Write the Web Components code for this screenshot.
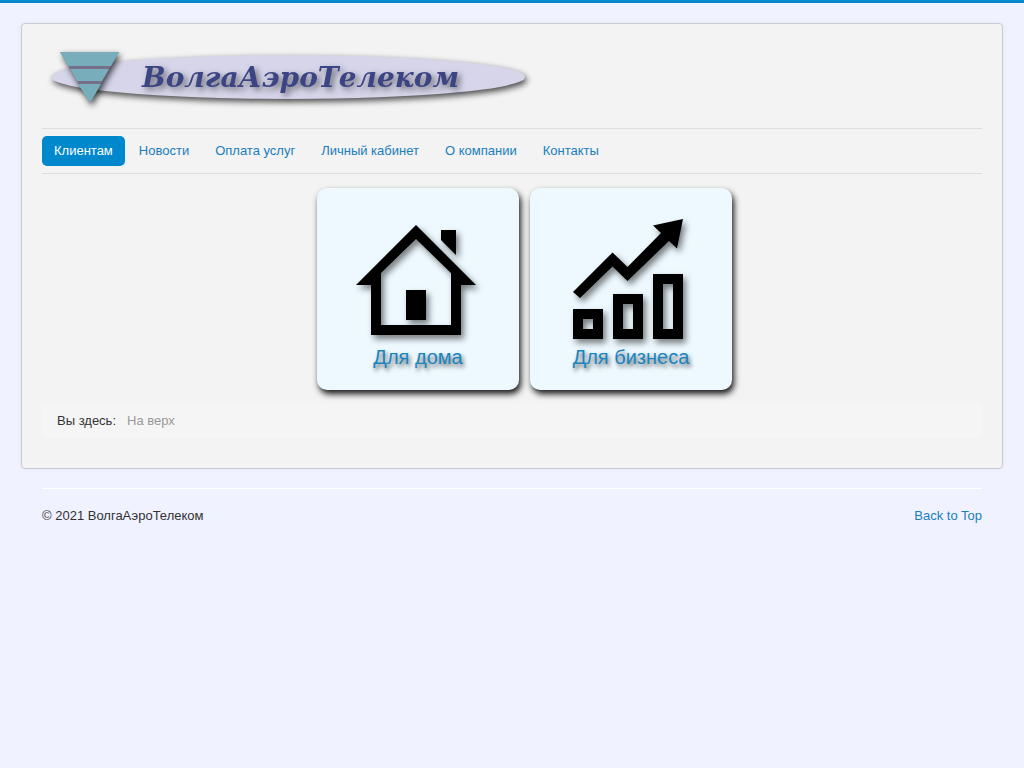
<!DOCTYPE html>
<html lang="ru">
<head>
<meta charset="utf-8">
<meta name="viewport" content="width=device-width, initial-scale=1">
<title>ВолгаАэроТелеком</title>
<style>
body {
  margin: 0;
  padding: 20px;
  border-top: 3px solid #0088cc;
  background: #f0f2ff;
  color: #333;
  font: 13px/18px "Liberation Sans", Arial, sans-serif;
}
</style>
</head>
<body>
<vat-page></vat-page>

<template id="page">
  <style>
    :host { display: block; max-width: 982px; margin: 0 auto; }
    main {
      padding: 20px 20px 30px;
      background: #f3f3f3;
      border: 1px solid #cacad0;
      border-radius: 4px;
      box-shadow: 0 0 6px rgba(0, 0, 0, .05);
    }
    .tiles { display: flex; flex-wrap: wrap; justify-content: center; gap: 11px; padding: 14px 0 14px 25px; }
  </style>
  <main>
    <vat-logo></vat-logo>
    <vat-nav>
      <vat-nav-item active>Клиентам</vat-nav-item>
      <vat-nav-item>Новости</vat-nav-item>
      <vat-nav-item>Оплата услуг</vat-nav-item>
      <vat-nav-item>Личный кабинет</vat-nav-item>
      <vat-nav-item>О компании</vat-nav-item>
      <vat-nav-item>Контакты</vat-nav-item>
    </vat-nav>
    <div class="tiles">
      <vat-tile>
        <svg slot="icon" viewBox="317 188 202 156" width="202" height="156" aria-hidden="true">
          <path fill-rule="evenodd" d="M416 225L476 285H461V335H371V285H356ZM416 239L381 273V325H451V273Z"/>
          <path d="M406 290H426V320H406ZM441 230H456V255L441 240Z"/>
        </svg>
        Для дома
      </vat-tile>
      <vat-tile>
        <svg slot="icon" viewBox="530 188 202 156" width="202" height="156" aria-hidden="true">
          <path d="M573 292L612.500 252.500L627.500 267L661 233L653 225.500L683 219L677 248.500L669 241L627.500 281L612.500 266.500L580 298Z"/>
          <path fill-rule="evenodd" d="M573 309H603V339H573ZM583 319V329H593V319ZM613 294H643V339H613ZM623 304V329H633V304ZM653 274H683V339H653ZM663 284V329H673V284Z"/>
        </svg>
        Для бизнеса
      </vat-tile>
    </div>
    <vat-crumbs>На верх</vat-crumbs>
  </main>
  <vat-footer>© 2021 ВолгаАэроТелеком</vat-footer>
</template>

<template id="logo">
  <style>
    :host { display: block; margin-bottom: 10px; }
    a, svg { display: block; }
    a { max-width: 500px; }
    svg { width: 100%; height: auto; overflow: visible; }
    .s { filter: drop-shadow(2px 3px 3px rgba(0, 0, 0, .7)); }
    text { font: italic bold 28px "DejaVu Serif", serif; fill: #3c4583; filter: drop-shadow(3px 3px 3px rgba(0, 0, 0, .5)); }
  </style>
  <a href="#" aria-label="ВолгаАэроТелеком">
    <svg viewBox="42 44 500 74">
      <ellipse class="s" cx="288" cy="77" rx="237" ry="22" fill="#d6d5ea"/>
      <g class="s">
        <path d="M60 52H119L90 103Z" fill="#756f88"/>
        <path d="M60 52H119L111 66H68ZM70 69H109L102 81H77ZM78 84H101L90 103Z" fill="#78adbb"/>
      </g>
      <text x="142" y="87">ВолгаАэроТелеком</text>
    </svg>
  </a>
</template>

<template id="nav">
  <style>
    :host { display: block; }
    nav {
      display: flex;
      flex-wrap: wrap;
      gap: 2px;
      padding: 7px 0;
      border: solid #ddd;
      border-width: 1px 0;
    }
  </style>
  <nav><slot></slot></nav>
</template>

<template id="nav-item">
  <style>
    :host { display: block; }
    a { display: block; padding: 6px 12px; border-radius: 5px; color: #1a7dbd; text-decoration: none; }
    :host([active]) a { background: #0088cc; color: #fff; }
  </style>
  <a href="#"><slot></slot></a>
</template>

<template id="tile">
  <style>
    :host { display: block; }
    a {
      display: block;
      width: 202px;
      height: 202px;
      border-radius: 10px;
      background: #edf9ff;
      box-shadow: 2px 4px 6px rgba(0, 0, 0, .9);
      color: #1a84bf;
      font-size: 20px;
      line-height: 26px;
      text-align: center;
      text-decoration: none;
      text-shadow: 2px 3px 4px rgba(0, 0, 0, .6);
    }
    ::slotted(svg) { display: block; filter: drop-shadow(3px 4px 3px rgba(0, 0, 0, .5)); }
  </style>
  <a href="#"><slot name="icon"></slot><slot></slot></a>
</template>

<template id="crumbs">
  <style>
    :host { display: block; }
    nav { display: flex; gap: 11px; padding: 8px 15px; border-radius: 4px; background: #f5f5f5; }
    .here { color: #999; }
  </style>
  <nav><span>Вы здесь:</span><span class="here"><slot></slot></span></nav>
</template>

<template id="footer">
  <style>
    :host { display: block; padding: 0 21px; }
    footer { margin-top: 19px; border-top: 1px solid #fff; padding-top: 18px; display: flex; justify-content: space-between; }
    a { color: #1a7dbd; text-decoration: none; }
  </style>
  <footer><span><slot></slot></span><a href="#">Back to Top</a></footer>
</template>

<script>
class TemplateElement extends HTMLElement {
  constructor() {
    super();
    const template = document.getElementById(this.constructor.template);
    this.attachShadow({ mode: "open" }).append(document.importNode(template.content, true));
  }
}
for (const name of ["logo", "nav", "nav-item", "tile", "crumbs", "footer", "page"]) {
  customElements.define("vat-" + name, class extends TemplateElement {
    static template = name;
  });
}
</script>
</body>
</html>
